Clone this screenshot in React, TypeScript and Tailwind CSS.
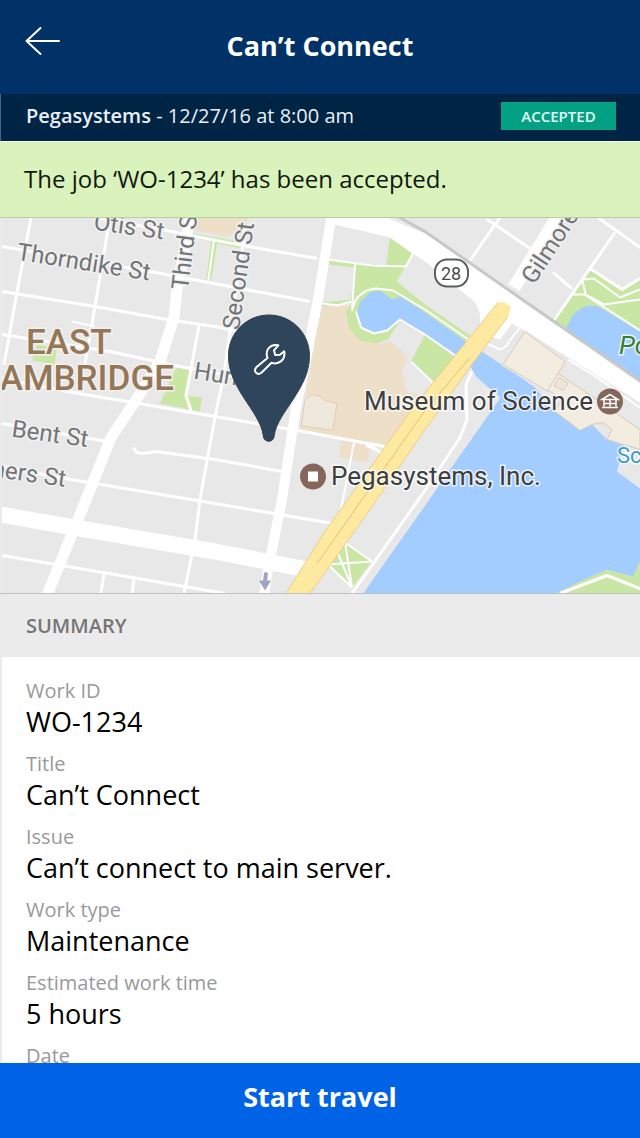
import React from "react";

type Field = { label: string; value?: string };

const fields: Field[] = [
  { label: "Work ID", value: "WO-1234" },
  { label: "Title", value: "Can’t Connect" },
  { label: "Issue", value: "Can’t connect to main server." },
  { label: "Work type", value: "Maintenance" },
  { label: "Estimated work time", value: "5 hours" },
  { label: "Date" },
];

function Header() {
  return (
    <header className="grid h-[94px] shrink-0 grid-cols-[1fr_auto_1fr] items-center bg-[#003267] px-6 text-white">
      <button type="button" aria-label="Back" className="w-10 pb-3">
        <svg viewBox="0 0 38 30" className="h-[30px] w-[38px]" fill="none" stroke="currentColor" strokeWidth="2" strokeLinecap="round" strokeLinejoin="round">
          <path d="M35 15H2.5M16.5 2L2.5 15l14 13" />
        </svg>
      </button>
      <h1 className="pb-[2px] text-[27px] font-bold leading-8">Can’t Connect</h1>
    </header>
  );
}

function StatusBar() {
  return (
    <div className="flex h-[47px] shrink-0 items-center justify-between border-l border-[#4a6480] bg-[#002443] pb-1 pl-[25px] pr-6 text-white">
      <p className="text-[20px] leading-6 text-[#eaf0f6]">
        <span className="font-semibold">Pegasystems</span> - 12/27/16 at 8:00 am
      </p>
      <span className="flex h-7 w-[115px] items-center justify-center bg-[#02a183] text-[15px] font-semibold leading-5 text-[#e2fbf4]">ACCEPTED</span>
    </div>
  );
}

function JobMap() {
  return (
    <svg
      role="img"
      aria-label="Map of the job location"
      viewBox="0 218 640 376"
      preserveAspectRatio="xMidYMid slice"
      className="block h-[376px] w-full shrink-0 border-b border-[#c0c0c0]"
      fontFamily="Roboto, sans-serif"
    >
      <rect x="0" y="218" width="640" height="376" fill="#e8e8e8" />

      {/* built-up areas */}
      <g fill="#eedfc8">
        <path d="M198 218H250L240 230L228 237L195 231Z" />
        <path d="M321 307L348 306L352 328L365 341L380 344L390 342L408 357L402 372L406 392L425 396L392 448L300 430Z" />
        <path d="M341 441L371 446L367 463L339 458Z" />
      </g>
      <path d="M305 400L312 395L321 397L325 401L337 404L333 431L301 426Z" fill="#f1e8dc" stroke="#dfcdb5" />

      {/* parks */}
      <g fill="#c9e6a4">
        <path d="M37 345L57 349L54 365L32 361Z" />
        <path d="M176 368L190 371L185 396L202 398L200 412L160 404Z" />
        <path d="M193 234L244 243L242 249L217 244L211 282H206L211 242L193 238Z" />
        <path d="M390 238L412 254L397 282L425 305L470 336L462 345L425 322L400 322L388 340L376 344L360 341L349 329L346 312L352 303L322 307L322 303L351 300L355 268L328 265L328 261L386 266Z" />
        <path d="M425 335L462 363L438 388L411 362Z" />
        <path d="M590 269L622 290L640 279V334L598 307L582 309L567 330L552 320Z" />
      </g>

      {/* water */}
      <g fill="#a3ccff">
        <path d="M425 313L470 345L483 353L505 367L535 388L555 412L580 430L592 425L607 440L624 446L617 472L640 489V594H363L425 506L500 398L476 377L470 366L425 335L400 320L388 330L377 333L363 329L357 314L360 302L370 293L380 291L392 300L400 297Z" />
        <path d="M566 329L573 315L582 308L590 306L598 307L640 332V383Z" />
      </g>
      <path d="M363 594L500 399L477 379L466 372L440 405L310 594Z" fill="#e8e8e8" />
      <path d="M345 543L372 562L352 588L328 565Z" fill="#c9e6a4" />
      <path d="M556 594L580 582L607 570L633 577L640 562V594Z" fill="#c9e6a4" />

      {/* museum buildings */}
      <path d="M483 345L525 328L640 404V432L570 395L548 393L503 367Z" fill="#e8e8e8" />
      <g fill="#f3ece1" stroke="#dccab5" strokeWidth="1">
        <path d="M525 332L565 362L548 392L503 365Z" />
        <path d="M558 374L640 430V450L607 440L612 430L603 423L592 425L580 431L555 412L562 400L548 390Z" />
        <path d="M559 378L568 384L563 391L554 386Z" fill="#ebe5dc" />
      </g>

      {/* streets */}
      <g fill="none" stroke="#fff" strokeWidth="3" strokeLinejoin="round">
        <path d="M31 218L17 293L4 365" />
        <path d="M110 218L95 307L85 365" />
        <path d="M2 247L24 251L150 272L214 284L310 302" />
        <path d="M2 292L95 307L167 320L215 327L305 345" />
        <path d="M95 218L167 231L190 236L243 246L317 259" />
        <path d="M2 335L110 352L175 366L305 390" />
        <path d="M2 379L67 392L133 403L215 417L303 432L390 448" />
        <path d="M2 424L107 442" />
        <path d="M134 448Q134 453 141 454L150 453L156 452L215 460L282 472" />
        <path d="M2 467L65 479L215 504L333 524" />
        <path d="M2 556L62 566L225 594" />
        <path d="M104 574L101 594M134 580L132 594" />
        <path d="M199 326L186 396L191 411" />
        <path d="M245 230L223 380L216 412L200 500L195 540L184 594" />
        <path d="M72 322L95 327" strokeWidth="2" />
        <path d="M214 240L208 283" strokeWidth="2" />
        <path d="M328 260L372 266L406 267L413 254M355 265L352 311" strokeWidth="2" />
        <path d="M322 304L338 306L351 302" strokeWidth="2" />
        <path d="M354 443L340 515" strokeWidth="2" />
        <path d="M366 446Q378 449 383 456" />
        <path d="M352 311Q356 291 376 289L393 291L425 310L470 341" strokeWidth="2" />
        <path d="M356 312L361 328L374 334L387 331L400 320L425 335L470 366" strokeWidth="2" />
        <path d="M411 362L438 388" strokeWidth="2" />
        <path d="M352 594L425 491L460 438L467 420L466 385L472 372" />
        <path d="M482 342L500 350Q507 348 509 342L520 328" strokeWidth="2" />
        <path d="M487 220L495 225L533 251M553 273L572 289M500 218L470 261" />
        <path d="M598 218L640 248M615 233L553 322M590 269L622 290L640 279" />
        <path d="M572 295H585L604 305L640 300M582 280L594 279L620 298L640 290M582 280L586 296" strokeWidth="2" />
        <path d="M586 296L640 331" strokeWidth="2" />
        <path d="M560 594L607 576L640 589" />
        <path d="M345 543L352 588M328 565L372 562M338 554L352 588M345 543L372 562M328 565L352 588" strokeWidth="2" />
        <path d="M568 360L600 380L640 408" strokeWidth="2" />
      </g>

      {/* main roads */}
      <g fill="none" stroke="#fff" strokeLinejoin="round">
        <path d="M190 218L177 290L174 318L160 362L135 402L111 438L78 520L46 598" strokeWidth="11" />
        <path d="M0 515L80 529L215 552L307 570" strokeWidth="16" />
        <path d="M331 220L318 300L296 408L282 500L268 570L264 596" strokeWidth="10" />
        <path d="M559 215L514 288" strokeWidth="13" />
      </g>
      <path d="M396 216L425 232L525 302L640 381" fill="none" stroke="#c6c8ca" strokeWidth="3" />
      <path d="M325 218H386L425 234L525 304L640 384V403L530 334L512 324L500 340L478 334Q484 314 474 302L425 262L411 253L390 238L335 225Z" fill="#fff" />
      <path d="M498 303Q505 301 511 308L508 317L468 370L445 403L425 430L370 510L310 594H286L325 532L413 408Z" fill="#fde99f" />
      <path d="M498 303L413 408L325 532L286 594M508 317L468 370L445 403L425 430L370 510L310 594" fill="none" stroke="#e9ce85" strokeWidth="1" />
      <path d="M470 358L425 411L317 564" fill="none" stroke="#e0c272" strokeWidth="1" />
      <path d="M266 573L265 582" stroke="#9ea5c4" strokeWidth="4" />
      <path d="M259 581H271L265 591Z" fill="#9ea5c4" />
      <rect x="435" y="260" width="33" height="27" rx="12" fill="#fff" stroke="#5b5d5f" strokeWidth="2" />
      <text x="451" y="280" fontSize="18" textAnchor="middle" fill="#4a4a4a">28</text>

      {/* labels */}
      <g fill="#717476" stroke="#f1f1f1" strokeWidth="3" strokeLinejoin="round" paintOrder="stroke" fontSize="24">
        <text transform="translate(93 230) rotate(8)">Otis St</text>
        <text transform="translate(16 260) rotate(9)" fontSize="24">Thorndike St</text>
        <text transform="translate(188 291) rotate(-83)">Third St</text>
        <text transform="translate(239 331) rotate(-82)">Second St</text>
        <text transform="translate(534 286) rotate(-57)">Gilmore</text>
        <text transform="translate(193 379) rotate(9)">Hurley St</text>
        <text transform="translate(11 437) rotate(8)">Bent St</text>
        <text transform="translate(-9 477) rotate(8)">ners St</text>
      </g>
      <g fill="#937758" stroke="#f4f1ed" strokeWidth="3" paintOrder="stroke" fontSize="35" fontWeight="500">
        <text x="26" y="354">EAST</text>
        <text x="174" y="390" textAnchor="end">AMBRIDGE</text>
      </g>
      <g fill="#3c3e40" stroke="#fff" strokeOpacity="0.75" strokeWidth="3" paintOrder="stroke" fontSize="26">
        <text x="364" y="410">Museum of Science</text>
        <text x="331" y="485">Pegasystems, Inc.</text>
        <text x="619" y="354" fill="#36802b" fontStyle="italic">Po</text>
        <text x="617" y="463" fill="#3b9bc8" fontSize="22">Sc</text>
      </g>

      {/* place markers */}
      <circle cx="313" cy="477" r="13" fill="#85665b" />
      <rect x="308" y="472" width="10" height="10" fill="#fff" />
      <circle cx="610" cy="402" r="13" fill="#85665b" />
      <path d="M602 400L610 395L618 400ZM604 400V407M610 400V407M616 400V407M602 408H618M604 404H616" fill="none" stroke="#fff" strokeWidth="1.500" />

      {/* job pin */}
      <path d="M269 315.500C246.500 315.500 228.500 333.500 228.500 356C228.500 373 236 386 244 398.500C252 411 262 424 263.300 436.500C263.800 443.500 273.700 443.500 274.200 436.500C275.500 424 286 411 294 398.500C302 386 309.500 373 309.500 356C309.500 333.500 291.500 315.500 269 315.500Z" fill="#2f455c" stroke="#33434a" />
      <path d="M278.300 345.800C270.500 344 264.500 350.500 267.500 358.400L256.300 367.800C253 371.500 257 376.500 261.400 373.200L271.500 363.300C278.500 365.500 286 360.500 284.200 351.800L280 355.200L275.200 355.400L274 350.800Z" fill="none" stroke="#fff" strokeWidth="2" strokeLinejoin="round" />
      <rect x="0" y="218" width="2" height="376" fill="#ebebeb" />
    </svg>
  );
}

function Summary() {
  return (
    <section>
      <h2 className="flex h-[63px] items-center bg-[#ebebeb] px-[26px] text-[20px] font-semibold leading-6 text-[#757575]">SUMMARY</h2>
      <dl className="flex flex-col gap-[11px] border-l-2 border-[#ebebeb] px-6 pt-5">
        {fields.map((field) => (
          <div key={field.label}>
            <dt className="text-[20px] leading-[28px] text-[#999]">{field.label}</dt>
            {field.value && <dd className="text-[27px] leading-[34px] text-black">{field.value}</dd>}
          </div>
        ))}
      </dl>
    </section>
  );
}

export default function App() {
  return (
    <div className="flex h-screen flex-col overflow-hidden bg-white font-['Open_Sans',sans-serif]">
      <Header />
      <StatusBar />
      <main className="min-h-0 flex-1 overflow-y-auto [scrollbar-width:none]">
        <p role="status" className="flex h-[77px] items-center border-b border-t border-b-[#b3cf9b] border-t-[#f1f7ea] bg-[#daf3bd] px-6 pb-[2px] text-[24px] leading-8 text-[#10180c]">
          The job ‘WO-1234’ has been accepted.
        </p>
        <JobMap />
        <Summary />
      </main>
      <button type="button" className="flex h-[75px] shrink-0 items-center justify-center bg-[#0063e6] pb-2 text-[27px] font-bold leading-8 text-white">
        Start travel
      </button>
    </div>
  );
}
